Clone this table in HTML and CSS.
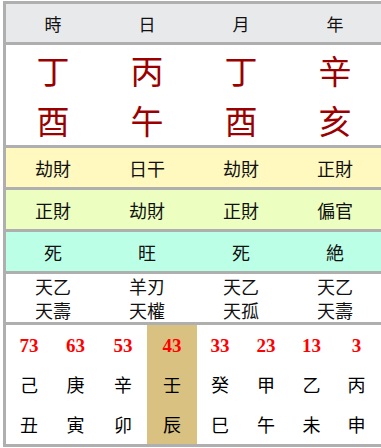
FILE: index.html
```
<!DOCTYPE html>
<html>
<head>
<meta charset="utf-8">
<link rel="stylesheet" href="styles.css">
</head>
<body>
<div class="chart">
  <div class="row head">
    <div>時</div><div>日</div><div>月</div><div>年</div>
  </div>
  <div class="sep"></div>
  <div class="pillars">
    <div class="row stem"><div>丁</div><div>丙</div><div>丁</div><div>辛</div></div>
    <div class="row stem"><div>酉</div><div>午</div><div>酉</div><div>亥</div></div>
  </div>
  <div class="sep"></div>
  <div class="row god yellow"><div>劫財</div><div>日干</div><div>劫財</div><div>正財</div></div>
  <div class="sep"></div>
  <div class="row god green"><div>正財</div><div>劫財</div><div>正財</div><div>偏官</div></div>
  <div class="sep"></div>
  <div class="row god cyan"><div>死</div><div>旺</div><div>死</div><div>絶</div></div>
  <div class="sep"></div>
  <div class="row star">
    <div><span>天乙</span><span>天壽</span></div>
    <div><span>羊刃</span><span>天權</span></div>
    <div><span>天乙</span><span>天孤</span></div>
    <div><span>天乙</span><span>天壽</span></div>
  </div>
  <div class="sep"></div>
  <div class="luck">
    <div class="col"><b>73</b><span>己</span><span>丑</span></div>
    <div class="col"><b>63</b><span>庚</span><span>寅</span></div>
    <div class="col"><b>53</b><span>辛</span><span>卯</span></div>
    <div class="col now"><b>43</b><span>壬</span><span>辰</span></div>
    <div class="col"><b>33</b><span>癸</span><span>巳</span></div>
    <div class="col"><b>23</b><span>甲</span><span>午</span></div>
    <div class="col"><b>13</b><span>乙</span><span>未</span></div>
    <div class="col"><b>3</b><span>丙</span><span>申</span></div>
  </div>
</div>
</body>
</html>
```
FILE: styles.css
```
html, body {
  margin: 0;
  padding: 0;
  background: #fff;
  overflow: hidden;
}
body {
  font-family: "Noto Sans CJK TC", "Noto Sans CJK JP", sans-serif;
  color: #111;
}
.chart {
  margin: 1px 0 0 3px;
  width: 376px;
  border: 3px solid #afafaf;
}
.sep {
  height: 3px;
  background: #afafaf;
}
.row {
  display: grid;
  grid-template-columns: repeat(4, 94px);
}
.row > div {
  display: flex;
  align-items: center;
  justify-content: center;
}
.head {
  height: 38px;
  background: #e8e9eb;
  font-size: 17px;
}
.stem {
  height: 50px;
  font-size: 33px;
  color: #9a0000;
  line-height: 1;
}
.god {
  height: 39px;
  font-size: 18px;
}
.yellow { background: #fff9c0; }
.green { background: #edffc0; }
.cyan { background: #bbffe6; }
.star {
  height: 48px;
  font-size: 18px;
}
.star > div {
  flex-direction: column;
  line-height: 23.5px;
  padding-top: 1px;
}
.luck {
  display: grid;
  grid-template-columns: 46px 47px 48px 50px 46px 46px 45px 45px;
  height: 119px;
}
.col {
  display: grid;
  grid-template-rows: 40px 38px 41px;
  justify-items: center;
  align-items: center;
}
.col.now {
  background: #d9c281;
}
.col b {
  font-family: "Liberation Serif", serif;
  font-weight: bold;
  font-size: 19px;
  color: #ff0000;
  padding-top: 1px;
}
.col span {
  font-size: 18px;
  color: #000;
}
```
